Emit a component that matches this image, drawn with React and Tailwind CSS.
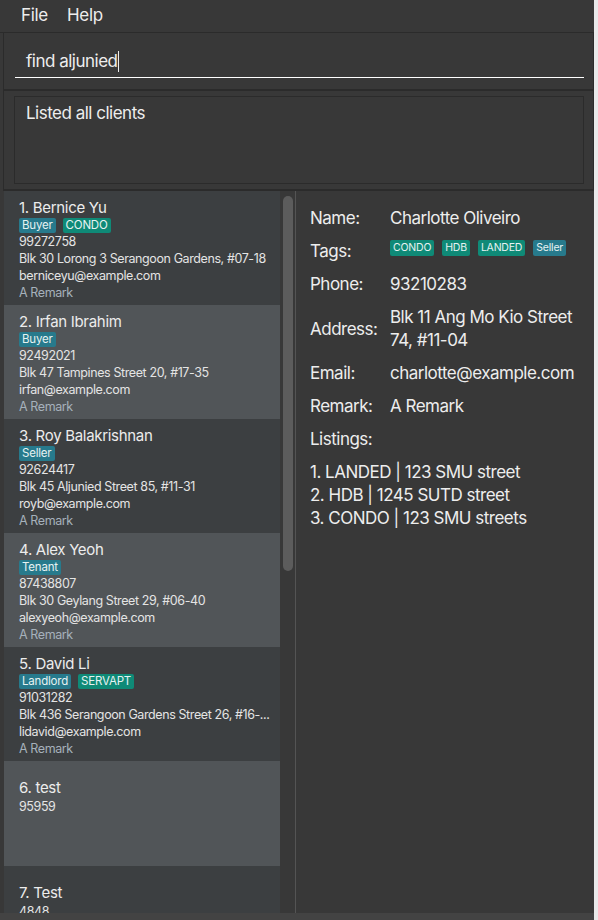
const clients = [
  {
    name: "Bernice Yu",
    tags: [
      ["Buyer", "role"],
      ["CONDO", "prop"],
    ],
    phone: "99272758",
    address: "Blk 30 Lorong 3 Serangoon Gardens, #07-18",
    email: "berniceyu@example.com",
    remark: "A Remark",
  },
  {
    name: "Irfan Ibrahim",
    tags: [["Buyer", "role"]],
    phone: "92492021",
    address: "Blk 47 Tampines Street 20, #17-35",
    email: "irfan@example.com",
    remark: "A Remark",
  },
  {
    name: "Roy Balakrishnan",
    tags: [["Seller", "role"]],
    phone: "92624417",
    address: "Blk 45 Aljunied Street 85, #11-31",
    email: "royb@example.com",
    remark: "A Remark",
  },
  {
    name: "Alex Yeoh",
    tags: [["Tenant", "role"]],
    phone: "87438807",
    address: "Blk 30 Geylang Street 29, #06-40",
    email: "alexyeoh@example.com",
    remark: "A Remark",
  },
  {
    name: "David Li",
    tags: [
      ["Landlord", "role"],
      ["SERVAPT", "prop"],
    ],
    phone: "91031282",
    address: "Blk 436 Serangoon Gardens Street 26, #16-...",
    email: "lidavid@example.com",
    remark: "A Remark",
  },
  { name: "test", phone: "95959" },
  { name: "Test", phone: "4848" },
];

function Tag({ label, kind, size = "list" }) {
  const color = kind === "role" ? "bg-[#277a8c]" : "bg-[#0f8a77]";
  const dims =
    size === "list"
      ? "h-[15px] px-[3px] text-[11.5px] leading-[15px] tracking-[-0.2px]"
      : "h-[16px] px-[3px] text-[10.5px] leading-[16px] tracking-[-0.2px]";
  return (
    <span className={`${color} ${dims} rounded-[2px] text-[#e6f2f2]`}>
      {label}
    </span>
  );
}

function ClientCell({ c, i }) {
  const bg = i % 2 === 0 ? "bg-[#3c3f41]" : "bg-[#515558]";
  const name = "text-[15px] leading-[20px] tracking-[-0.3px] text-[#ececec]";
  const line = "text-[12.5px] leading-[17px] tracking-[-0.4px] text-[#e4e4e4]";
  if (!c.tags) {
    return (
      <div className={`${bg} h-[105px] shrink-0 pl-[15px] pt-[17px]`}>
        <div className={name}>
          {i + 1}. {c.name}
        </div>
        <div className={line}>{c.phone}</div>
      </div>
    );
  }
  return (
    <div className={`${bg} h-[114px] shrink-0 pl-[15px] pr-[8px] pt-[7px]`}>
      <div className={name}>
        {i + 1}. {c.name}
      </div>
      <div className="flex h-[15px] gap-[7px]">
        {c.tags.map(([t, k]) => (
          <Tag key={t} label={t} kind={k} />
        ))}
      </div>
      <div className={line}>
        <div>{c.phone}</div>
        <div className="overflow-hidden whitespace-nowrap">{c.address}</div>
        <div>{c.email}</div>
        <div className="text-[#a6b1bb]">{c.remark}</div>
      </div>
    </div>
  );
}

function Row({ label, children, center }) {
  return (
    <div className={`flex ${center ? "items-center" : "items-start"}`}>
      <div className="w-[80px] shrink-0">{label}</div>
      <div className="min-w-0">{children}</div>
    </div>
  );
}

export default function App() {
  return (
    <div
      className="flex h-[920px] w-[598px] overflow-hidden bg-[#e9e9ea]"
      style={{ fontFamily: "Inter, 'Noto Sans', sans-serif" }}
    >
      <div className="flex h-full w-[594px] flex-col bg-[#383838] text-[#ededed]">
        {/* menu bar */}
        <div className="flex h-[33px] shrink-0 items-center gap-[19px] border-b border-[#2b2b2b] pl-[21px] text-[17px] tracking-[-0.3px]">
          <span>File</span>
          <span>Help</span>
        </div>

        {/* command box */}
        <div className="h-[58px] shrink-0 border-x border-b-2 border-[#2b2b2b] ml-[3px] pl-[11px] pr-[9px] pt-[15px]">
          <div className="flex h-[30px] items-start border-b border-white pl-[11px] pt-[2px] text-[17px] leading-[23px] tracking-[-0.5px]">
            <span>find aljunied</span>
            <span className="ml-[1px] mt-[1px] h-[21px] w-[1px] bg-[#ededed]" />
          </div>
        </div>

        {/* result display */}
        <div className="h-[100px] shrink-0 border-x border-b-2 border-[#2b2b2b] ml-[3px] pl-[10px] pr-[9px] pt-[5px]">
          <div className="h-[88px] border border-[#2b2b2b] pl-[11px] pt-[5px] text-[17px] leading-[23px] tracking-[-0.5px]">
            Listed all clients
          </div>
        </div>

        {/* lower area */}
        <div className="flex min-h-0 flex-1">
          <div className="flex w-[292px] shrink-0 ml-[4px]">
            <div className="flex w-[276px] flex-col overflow-hidden">
              {clients.map((c, i) => (
                <ClientCell key={i} c={c} i={i} />
              ))}
            </div>
            <div className="w-[15px] shrink-0 pl-[3px] pt-[5px]">
              <div className="h-[375px] w-[10px] rounded-[5px] bg-[#5c5c5c]" />
            </div>
            <div className="w-[1px] shrink-0 bg-[#545454]" />
          </div>

          <div className="flex flex-1 flex-col gap-[10px] pl-[14px] pt-[16px] text-[17px] leading-[23px] tracking-[-0.5px]">
            <Row label="Name:">Charlotte Oliveiro</Row>
            <Row label="Tags:">
              <div className="flex gap-[8px] tracking-normal">
                <Tag label="CONDO" kind="prop" size="detail" />
                <Tag label="HDB" kind="prop" size="detail" />
                <Tag label="LANDED" kind="prop" size="detail" />
                <Tag label="Seller" kind="role" size="detail" />
              </div>
            </Row>
            <Row label="Phone:">93210283</Row>
            <Row label="Address:" center>
              <div className="w-[195px]">Blk 11 Ang Mo Kio Street 74, #11-04</div>
            </Row>
            <Row label="Email:">charlotte@example.com</Row>
            <Row label="Remark:">A Remark</Row>
            <div>Listings:</div>
            <div>
              <div>1. LANDED | 123 SMU street</div>
              <div>2. HDB | 1245 SUTD street</div>
              <div>3. CONDO | 123 SMU streets</div>
            </div>
          </div>
        </div>

        <div className="h-[7px] shrink-0 bg-[#434343]" />
      </div>
    </div>
  );
}
